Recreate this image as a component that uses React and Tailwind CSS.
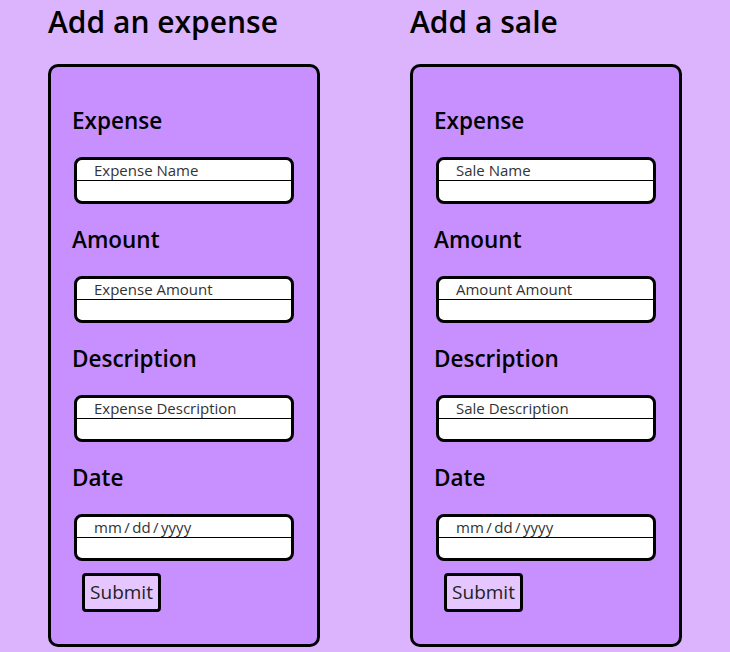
import React from "react";

const forms = [
  {
    title: "Add an expense",
    fields: [
      { label: "Expense", placeholder: "Expense Name" },
      { label: "Amount", placeholder: "Expense Amount" },
      { label: "Description", placeholder: "Expense Description" },
      { label: "Date", placeholder: "mm\u2009/\u2009dd\u2009/\u2009yyyy" },
    ],
  },
  {
    title: "Add a sale",
    fields: [
      { label: "Expense", placeholder: "Sale Name" },
      { label: "Amount", placeholder: "Amount Amount" },
      { label: "Description", placeholder: "Sale Description" },
      { label: "Date", placeholder: "mm\u2009/\u2009dd\u2009/\u2009yyyy" },
    ],
  },
];

function Field({ label, placeholder }) {
  return (
    <div className="flex flex-col">
      <h2 className="text-[22.5px] leading-[28px] font-semibold text-black">{label}</h2>
      <div className="mt-[22px] mb-[22px] ml-[2px] w-[220px] h-[47px] flex flex-col bg-white border-[3px] border-black rounded-[8px] overflow-hidden">
        <div className="h-[21px] border-b border-black pl-[17px] text-[15px] leading-[20px] text-[#333]">
          {placeholder}
        </div>
        <div className="flex-1" />
      </div>
    </div>
  );
}

function FormCard({ title, fields }) {
  return (
    <div className="flex flex-col">
      <h1 className="h-[36px] text-[30px] leading-[36px] font-semibold text-black">{title}</h1>
      <div className="mt-[24px] w-[272px] bg-[#c890fe] border-[3px] border-black rounded-[10px] pt-[40px] pl-[21px] pb-[32px] flex flex-col">
        {fields.map((f) => (
          <Field key={f.label} {...f} />
        ))}
        <button className="-mt-[10px] ml-[10px] self-start w-[79px] h-[39px] bg-[#e6c6ff] border-[3px] border-black rounded-[4px] text-[19px] text-[#222]">
          Submit
        </button>
      </div>
    </div>
  );
}

export default function App() {
  return (
    <div
      className="min-h-screen w-full bg-[#dcb4fe] pt-[4px] px-[48px] flex gap-[90px]"
      style={{ fontFamily: '"Open Sans", "Noto Sans", sans-serif' }}
    >
      {forms.map((f) => (
        <FormCard key={f.title} {...f} />
      ))}
    </div>
  );
}
